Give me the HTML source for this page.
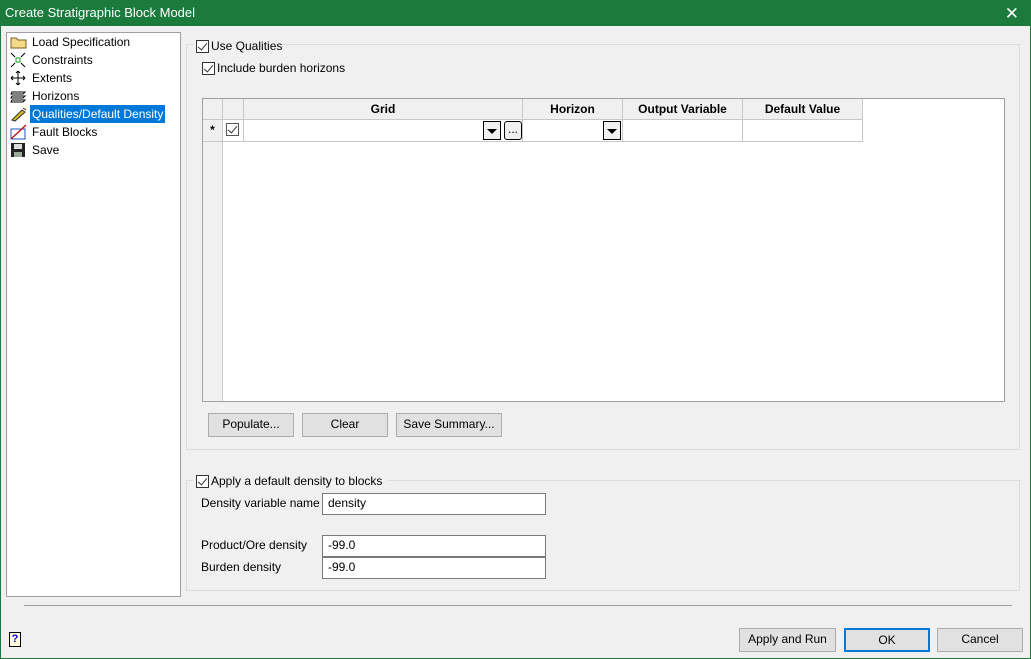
<!DOCTYPE html>
<html><head><meta charset="utf-8"><style>
*{box-sizing:border-box;margin:0;padding:0}
body{width:1031px;height:659px;background:#f0f0f0;font-family:"Liberation Sans",sans-serif;font-size:12px;color:#000;position:relative;overflow:hidden}
.abs{position:absolute}
.title{left:0;top:0;width:1031px;height:26px;background:#1a7b3d;color:#fff;font-size:13px;line-height:26px;padding-left:5px}
.tree{left:6px;top:32px;width:175px;height:565px;background:#fff;border:1px solid #a0a0a0}
.ti{position:absolute;left:3px;height:18px;line-height:18px;white-space:nowrap}
.ti svg{position:absolute;left:0;top:1px}
.ti span{position:absolute;left:20px;padding:0 2px}
.grp{border:1px solid #dcdcdc}
.cb{position:absolute;width:13px;height:13px;border:1px solid #333;background:#fff}
.cb:after{content:"";position:absolute;left:3px;top:0px;width:4px;height:8px;border:solid #333;border-width:0 1.5px 1.5px 0;transform:rotate(40deg)}
.btn{position:absolute;background:#e1e1e1;border:1px solid #adadad;text-align:center;line-height:21px}
.inp{position:absolute;background:#fff;border:1px solid #7a7a7a;padding-left:5px;line-height:19px}
.th{position:absolute;top:0;height:21px;border-right:1px solid #c8c8c8;border-bottom:1px solid #c8c8c8;background:#f0f0f0;font-weight:bold;text-align:center;line-height:21px}
.td{position:absolute;top:21px;height:22px;border-right:1px solid #c8c8c8;border-bottom:1px solid #c8c8c8;background:#fff}
.dd{position:absolute;width:18px;height:19px;border:1px solid #000;background:#f0f0f0}
.dd:after{content:"";position:absolute;left:3px;top:7px;border-left:5px solid transparent;border-right:5px solid transparent;border-top:5px solid #000}
</style></head><body>
<div class="abs title">Create Stratigraphic Block Model</div>
<div class="abs" style="right:12px;top:4px;color:#fff;font-size:17px">✕</div>
<div class="abs" style="left:0;top:26px;width:1px;height:633px;background:#1c7a3c"></div>
<div class="abs" style="right:0;top:26px;width:1px;height:633px;background:#1c7a3c"></div>
<div class="abs" style="left:0;bottom:0;width:1031px;height:1px;background:#1c7a3c"></div>

<div class="abs tree">
 <div class="ti" style="top:0"><svg width="18" height="16"><path d="M1 4h5l2 2h8v8H1z" fill="#f5d98a" stroke="#7a6020"/></svg><span>Load Specification</span></div>
 <div class="ti" style="top:18px"><svg width="18" height="16"><rect x="6" y="6" width="4" height="4" fill="none" stroke="#1a9a1a"/><path d="M1 1l4 4M15 1l-4 4M1 15l4-4M15 15l-4-4" stroke="#000"/></svg><span>Constraints</span></div>
 <div class="ti" style="top:36px"><svg width="18" height="16"><path d="M8 1v14M1 8h14M8 1l-2 2M8 1l2 2M8 15l-2-2M8 15l2-2M1 8l2-2M1 8l2 2M15 8l-2-2M15 8l-2 2" stroke="#000" fill="none"/></svg><span>Extents</span></div>
 <div class="ti" style="top:54px"><svg width="18" height="16"><path d="M2 4h13l-2 2H1zM2 8h13l-2 2H1zM2 12h13l-2 2H1z" fill="none" stroke="#000"/></svg><span>Horizons</span></div>
 <div class="ti" style="top:72px"><svg width="18" height="16"><path d="M2 14l10-10 3 2-10 9z" fill="#d8c020" stroke="#333"/><path d="M13 2l3 2" stroke="#333"/></svg><span style="background:#0078d7;color:#fff">Qualities/Default Density</span></div>
 <div class="ti" style="top:90px"><svg width="18" height="16"><rect x="1" y="5" width="14" height="10" fill="none" stroke="#2050c0"/><path d="M1 15L16 1" stroke="#c02020" stroke-width="1.5"/></svg><span>Fault Blocks</span></div>
 <div class="ti" style="top:108px"><svg width="18" height="16"><rect x="1" y="1" width="14" height="14" fill="#222"/><rect x="4" y="2" width="8" height="5" fill="#ddd"/><rect x="4" y="10" width="8" height="5" fill="#9a9"/></svg><span>Save</span></div>
</div>

<div class="abs grp" style="left:186px;top:44px;width:834px;height:406px"></div>
<div class="abs" style="left:193px;top:38px;width:90px;height:16px;background:#f0f0f0"></div>
<div class="cb" style="left:196px;top:40px"></div>
<div class="abs" style="left:211px;top:39px">Use Qualities</div>
<div class="cb" style="left:202px;top:62px"></div>
<div class="abs" style="left:217px;top:61px">Include burden horizons</div>

<div class="abs" style="left:202px;top:98px;width:803px;height:304px;background:#fff;border:1px solid #a0a0a0">
 <div class="abs" style="left:0;top:0;width:20px;height:302px;background:#f0f0f0;border-right:1px solid #c8c8c8"></div>
 <div class="th" style="left:0;width:20px"></div>
 <div class="th" style="left:20px;width:21px"></div>
 <div class="th" style="left:41px;width:279px">Grid</div>
 <div class="th" style="left:320px;width:100px">Horizon</div>
 <div class="th" style="left:420px;width:120px">Output Variable</div>
 <div class="th" style="left:540px;width:120px">Default Value</div>
 <div class="td" style="left:0;width:20px;background:#f0f0f0;text-align:center;font-weight:bold;line-height:20px">*</div>
 <div class="td" style="left:20px;width:21px"><div class="cb" style="left:3px;top:3px;border-color:#555"></div></div>
 <div class="td" style="left:41px;width:279px"><div class="dd" style="left:239px;top:1px"></div><div class="abs" style="left:260px;top:1px;width:18px;height:19px;border:1px solid #000;border-radius:3px;background:#f0f0f0;text-align:center;line-height:14px">...</div></div>
 <div class="td" style="left:320px;width:100px"><div class="dd" style="left:80px;top:1px"></div></div>
 <div class="td" style="left:420px;width:120px"></div>
 <div class="td" style="left:540px;width:120px"></div>
</div>

<div class="btn" style="left:208px;top:413px;width:86px;height:24px">Populate...</div>
<div class="btn" style="left:302px;top:413px;width:86px;height:24px">Clear</div>
<div class="btn" style="left:396px;top:413px;width:106px;height:24px">Save Summary...</div>

<div class="abs grp" style="left:186px;top:480px;width:834px;height:111px"></div>
<div class="abs" style="left:193px;top:474px;width:195px;height:16px;background:#f0f0f0"></div>
<div class="cb" style="left:196px;top:475px"></div>
<div class="abs" style="left:211px;top:474px">Apply a default density to blocks</div>
<div class="abs" style="left:201px;top:496px">Density variable name</div>
<div class="inp" style="left:322px;top:493px;width:224px;height:22px">density</div>
<div class="abs" style="left:201px;top:538px">Product/Ore density</div>
<div class="inp" style="left:322px;top:535px;width:224px;height:22px">-99.0</div>
<div class="abs" style="left:201px;top:560px">Burden density</div>
<div class="inp" style="left:322px;top:557px;width:224px;height:22px">-99.0</div>

<div class="abs" style="left:24px;top:605px;width:988px;height:1px;background:#a0a0a0"></div>
<div class="abs" style="left:9px;top:632px;width:12px;height:15px;border:1px solid #000;background:#ffffe0;color:#00c;font-weight:bold;font-size:11px;text-align:center;line-height:13px">?</div>
<div class="btn" style="left:739px;top:628px;width:97px;height:24px">Apply and Run</div>
<div class="btn" style="left:844px;top:628px;width:86px;height:24px;border:2px solid #0078d7;line-height:20px">OK</div>
<div class="btn" style="left:937px;top:628px;width:86px;height:24px">Cancel</div>
</body></html>
